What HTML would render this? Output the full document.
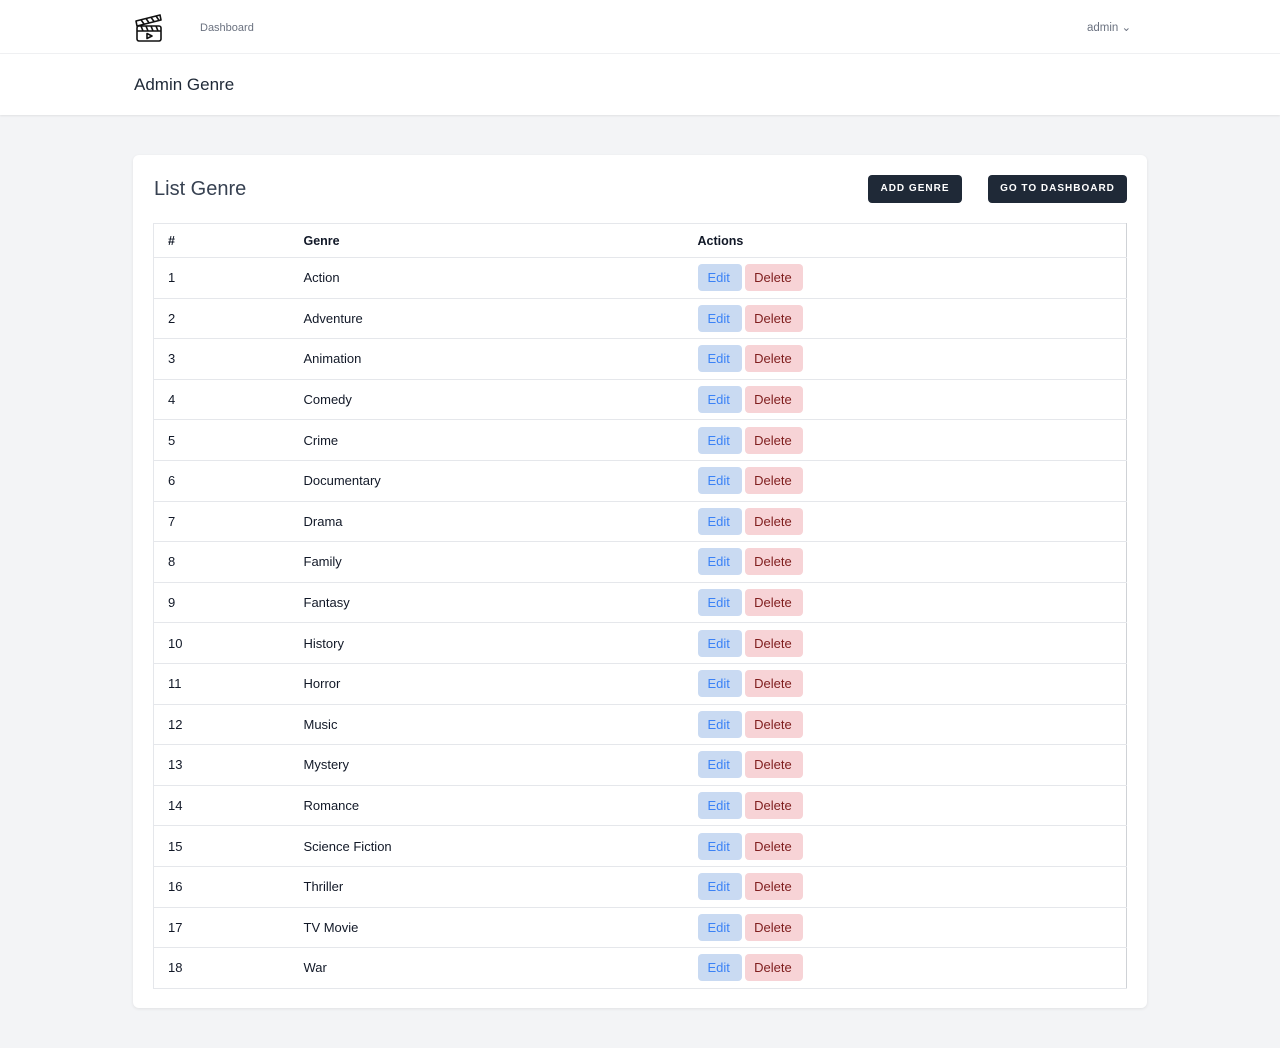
<!DOCTYPE html>
<html><head><style>
*{box-sizing:border-box;margin:0;padding:0}
body{width:1280px;height:1048px;background:#f3f4f6;font-family:"Liberation Sans",sans-serif;color:#111827;overflow:hidden}
nav{height:54px;background:#fff;border-bottom:1px solid #f0f1f3;position:relative}
.logo{position:absolute;left:134px;top:11px}
.dash{position:absolute;left:200px;top:22px;font-size:11px;color:#6b7280}
.admin{position:absolute;left:1087px;top:20px;font-size:11.5px;color:#6b7280}
header{height:61px;background:#fff;box-shadow:0 1px 2px rgba(0,0,0,.08);position:relative}
header h2{position:absolute;left:134px;top:21px;font-size:17px;font-weight:normal;color:#1f2937}
.card{position:absolute;left:133px;top:155px;width:1014px;height:853px;background:#fff;border-radius:6px;box-shadow:0 1px 3px rgba(0,0,0,.08)}
.card h3{position:absolute;left:21px;top:23px;font-size:20px;font-weight:normal;color:#374151}
.btn{position:absolute;top:20px;height:28px;background:#1f2937;color:#fff;font-size:10px;font-weight:bold;letter-spacing:1px;border-radius:4px;line-height:28px;text-align:center}
table{position:absolute;left:20px;top:68px;width:974px;border-collapse:collapse;border:1px solid #e5e7eb;border-right:1px solid #cfd2d6;font-size:13px}
th{text-align:left;font-weight:bold;height:34px;font-size:12.5px}
td{height:40.6px;border-top:1px solid #e5e7eb}
th:first-child,td:first-child{padding-left:14px;width:150px}
th:nth-child(2),td:nth-child(2){width:394px}
.e,.d{display:inline-block;height:27px;line-height:27px;border-radius:4px;font-size:13px;padding:0 10px}
.e{background:#c9daf2;color:#3b82f6;width:44px}
.d{background:#f7d3d6;color:#7f1d1d;width:58px;padding:0 9px}
</style></head><body>
<nav>
<svg class="logo" width="30" height="32" viewBox="0 0 30 32" fill="none" stroke="#111" stroke-width="1.6" stroke-linejoin="round">
<path d="M2 10 L26 4 L27 9 L3 15 Z"/><path d="M7 8.8 L10 13 M12 7.5 L15 11.8 M17 6.3 L20 10.5 M22 5 L25 9.3"/>
<rect x="3" y="15" width="24" height="15" rx="2"/><path d="M3 20 H27"/><path d="M7 15 L9 20 M12 15 L14 20 M17 15 L19 20 M22 15 L24 20"/>
<path d="M13 22.5 L18 25 L13 27.5 Z"/></svg>
<div class="dash">Dashboard</div>
<div class="admin">admin &#8964;</div>
</nav>
<header><h2>Admin Genre</h2></header>
<div class="card">
<h3>List Genre</h3>
<div class="btn" style="left:735px;width:94px">ADD GENRE</div>
<div class="btn" style="left:855px;width:139px">GO TO DASHBOARD</div>
<table>
<tr><th>#</th><th>Genre</th><th>Actions</th></tr>
<tr><td>1</td><td>Action</td><td><span class="e">Edit</span> <span class="d">Delete</span></td></tr>
<tr><td>2</td><td>Adventure</td><td><span class="e">Edit</span> <span class="d">Delete</span></td></tr>
<tr><td>3</td><td>Animation</td><td><span class="e">Edit</span> <span class="d">Delete</span></td></tr>
<tr><td>4</td><td>Comedy</td><td><span class="e">Edit</span> <span class="d">Delete</span></td></tr>
<tr><td>5</td><td>Crime</td><td><span class="e">Edit</span> <span class="d">Delete</span></td></tr>
<tr><td>6</td><td>Documentary</td><td><span class="e">Edit</span> <span class="d">Delete</span></td></tr>
<tr><td>7</td><td>Drama</td><td><span class="e">Edit</span> <span class="d">Delete</span></td></tr>
<tr><td>8</td><td>Family</td><td><span class="e">Edit</span> <span class="d">Delete</span></td></tr>
<tr><td>9</td><td>Fantasy</td><td><span class="e">Edit</span> <span class="d">Delete</span></td></tr>
<tr><td>10</td><td>History</td><td><span class="e">Edit</span> <span class="d">Delete</span></td></tr>
<tr><td>11</td><td>Horror</td><td><span class="e">Edit</span> <span class="d">Delete</span></td></tr>
<tr><td>12</td><td>Music</td><td><span class="e">Edit</span> <span class="d">Delete</span></td></tr>
<tr><td>13</td><td>Mystery</td><td><span class="e">Edit</span> <span class="d">Delete</span></td></tr>
<tr><td>14</td><td>Romance</td><td><span class="e">Edit</span> <span class="d">Delete</span></td></tr>
<tr><td>15</td><td>Science Fiction</td><td><span class="e">Edit</span> <span class="d">Delete</span></td></tr>
<tr><td>16</td><td>Thriller</td><td><span class="e">Edit</span> <span class="d">Delete</span></td></tr>
<tr><td>17</td><td>TV Movie</td><td><span class="e">Edit</span> <span class="d">Delete</span></td></tr>
<tr><td>18</td><td>War</td><td><span class="e">Edit</span> <span class="d">Delete</span></td></tr>
</table>
</div>
</body></html>
